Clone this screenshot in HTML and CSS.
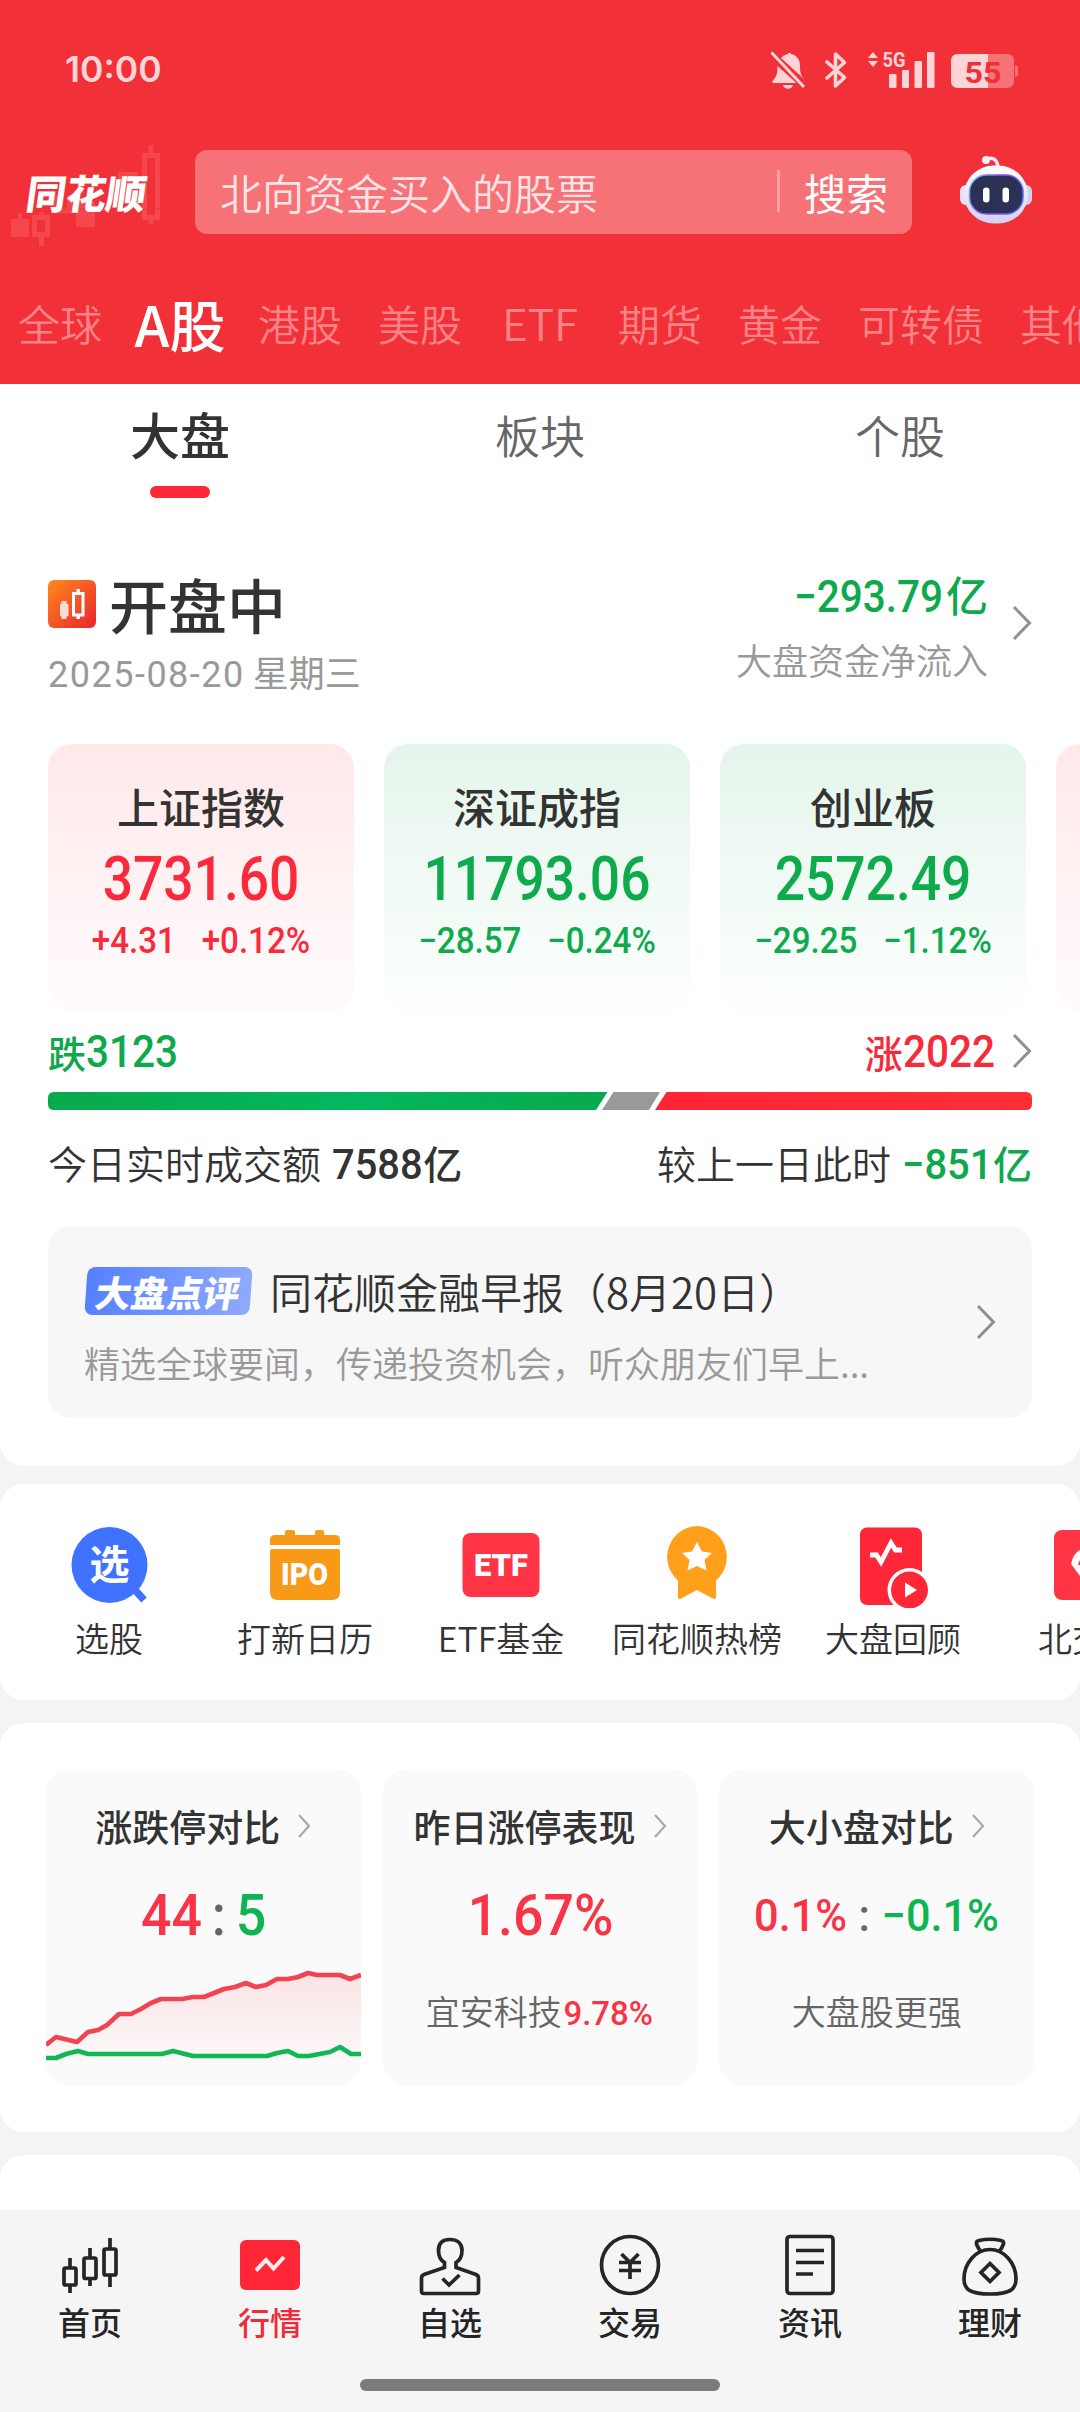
FILE: index.html
```html
<!DOCTYPE html>
<html lang="zh-CN">
<head>
<meta charset="utf-8">
<title>同花顺 行情</title>
<link rel="stylesheet" href="styles.css">
</head>
<body>
<header class="top">
  <svg class="top-art" viewBox="0 0 170 150" fill="none">
    <g fill="#f4484e"><rect x="11" y="100" width="18" height="18"/><rect x="18" y="94" width="4" height="6"/><rect x="76" y="82" width="19" height="26"/><rect x="118" y="53" width="20" height="30"/></g>
    <g stroke="#f4484e" stroke-width="5"><rect x="34.500" y="98.500" width="13" height="17"/><path d="M41.500 93v5M41.500 116v11M151 26v9M151 98v7"/><path d="M56.500 76v16h13V76"/><rect x="144.500" y="36.500" width="13" height="62"/></g>
    <path d="M0 49h165M0 90h165M0 131h170M51 0v145M122 0v145" stroke="#f2343b" stroke-width="1"/>
  </svg>
  <div class="status">
    <span class="clock">10:00</span>
    <svg class="status-icons" viewBox="0 0 250 40" fill="#fdd5d7">
      <path d="M11 8 C14 5 17 4 18 4 V3h3v1c6 1 9 6 9 12 0 7 1 9 4 13L11 8z"/>
      <path d="M7.500 16c0 8-1 11-5 15v2h24z"/><path d="M13 35h10c-1 5-9 5-10 0z"/>
      <path d="M1.500 2.500 34 37" stroke="#fdd5d7" stroke-width="3"/>
      <path d="M57 12 74.500 27.500 65.500 36V4l9 8.500L57 28" fill="none" stroke="#fdd5d7" stroke-width="3.600" stroke-linejoin="round" stroke-linecap="round"/>
      <path d="M103 2l5 6H98zM103 17l5-6H98z"/>
      <text x="112.500" y="17" class="net" textLength="23" lengthAdjust="spacingAndGlyphs">5G</text>
      <rect x="119" y="24" width="7.500" height="14" rx="1"/><rect x="132" y="20" width="7" height="18" rx="1"/><rect x="144.500" y="11" width="7.500" height="27" rx="1"/><rect x="157" y="2" width="7.500" height="36" rx="1"/>
      <path d="M218 4h19q7 0 7 7v20q0 7-7 7h-19z" fill="#f67276"/><path d="M218 4h-30q-7 0-7 7v20q0 7 7 7h30z"/><path d="M245 15q3 0 3 3v6q0 3-3 3z" fill="#f67276"/>
      <text x="194.500" y="32.500" class="batt" textLength="37" lengthAdjust="spacingAndGlyphs">55</text>
    </svg>
  </div>
  <div class="search-row">
    <span class="logo">同花顺</span>
    <div class="search"><span class="hint">北向资金买入的股票</span><i></i><b>搜索</b></div>
    <svg class="robot" viewBox="0 0 76 72">
      <defs><linearGradient id="shell" x1="0" y1="0" x2="0" y2="1"><stop offset="0" stop-color="#fff"/><stop offset=".6" stop-color="#e6e4fa"/><stop offset="1" stop-color="#d4cff2"/></linearGradient>
      <linearGradient id="rim" x1="0" y1="0" x2="1" y2=".4"><stop offset="0" stop-color="#72c6ff"/><stop offset=".5" stop-color="#9a4af0"/><stop offset="1" stop-color="#5a66f0"/></linearGradient></defs>
      <path d="M28 7c7-2 11 0 12 8" fill="none" stroke="#e8e6fb" stroke-width="3.500"/><circle cx="28" cy="8" r="4" fill="#f1effd"/>
      <rect x="2" y="33" width="12" height="20" rx="6" fill="#e4e1f8"/><rect x="62" y="33" width="12" height="20" rx="6" fill="#d3cff3"/>
      <rect x="6" y="13.500" width="64" height="58" rx="30" fill="url(#shell)"/>
      <rect x="11.500" y="23" width="53.500" height="39" rx="17" fill="#2a3154" stroke="url(#rim)" stroke-width="1.500"/>
      <rect x="25" y="35.500" width="6.500" height="15" rx="3.200" fill="#fff"/><rect x="44.500" y="35.500" width="6.500" height="15" rx="3.200" fill="#fff"/>
    </svg>
  </div>
  <nav class="markets"><span>全球</span><span class="on">A股</span><span>港股</span><span>美股</span><span class="etf">ETF</span><span>期货</span><span>黄金</span><span>可转债</span><span>其他</span></nav>
</header>

<main>
<section class="panel overview">
  <div class="subtabs"><span class="on">大盘</span><span>板块</span><span>个股</span></div>
  <div class="state">
    <div class="state-left">
      <h1><svg class="open-icon" viewBox="0 0 48 48"><defs><linearGradient id="og" x1="0" y1="0" x2="1" y2="1"><stop offset="0" stop-color="#ff8a1c"/><stop offset="1" stop-color="#e8252f"/></linearGradient></defs><rect width="48" height="48" rx="6" fill="url(#og)"/><path d="M12 25q0-1.500 1.500-1.500V21h5v2.500q2 0 2 1.500v10q0 1.500-2 1.500V39h-5v-2.500q-1.500 0-1.500-1.500z" fill="#fddcd6"/><rect x="25.500" y="13.500" width="9.500" height="21.500" fill="none" stroke="#fff" stroke-width="3"/><path d="M30.200 9v4M30.200 36v3" stroke="#fff" stroke-width="3.500"/></svg>开盘中</h1>
      <p><span class="n">2025-08-20</span> 星期三</p>
    </div>
    <div class="state-right"><strong class="green"><span class="n">−293.79</span>亿</strong><p>大盘资金净流入</p></div>
    <svg class="chev" viewBox="0 0 20 36"><path d="M2 2 17.500 18 2 34"/></svg>
  </div>
  <div class="indices">
    <article class="idx up"><h2>上证指数</h2><strong class="n">3731.60</strong><p class="n"><span>+4.31</span><span>+0.12%</span></p></article>
    <article class="idx down"><h2>深证成指</h2><strong class="n">11793.06</strong><p class="n"><span>−28.57</span><span>−0.24%</span></p></article>
    <article class="idx down"><h2>创业板</h2><strong class="n">2572.49</strong><p class="n"><span>−29.25</span><span>−1.12%</span></p></article>
    <article class="idx up"></article>
  </div>
  <div class="breadth"><span class="green">跌<b class="n">3123</b></span><span class="red">涨<b class="n">2022</b></span><svg class="chev" viewBox="0 0 20 36"><path d="M2 2 17.500 18 2 34"/></svg></div>
  <svg class="ratio" viewBox="0 0 984 18"><defs><linearGradient id="gg"><stop offset="0" stop-color="#08aa4c"/><stop offset=".55" stop-color="#03b75e"/><stop offset="1" stop-color="#08aa4c"/></linearGradient><linearGradient id="rg"><stop offset="0" stop-color="#ff2436"/><stop offset="1" stop-color="#ff2f36"/></linearGradient></defs>
    <path d="M6 0H559.500L548 18H6Q0 18 0 12V6Q0 0 6 0z" fill="url(#gg)"/><path d="M565.500 0H612L601 18H554z" fill="#999"/><path d="M618.500 0H978Q984 0 984 6V12Q984 18 978 18H607z" fill="url(#rg)"/></svg>
  <div class="volume"><p>今日实时成交额 <b><span class="n">7588</span>亿</b></p><p>较上一日此时 <b class="green"><span class="n">−851</span>亿</b></p></div>
  <div class="news">
    <div class="news-body"><div class="news-head"><span class="badge"><em>大盘点评</em></span><span class="news-title">同花顺金融早报（8月20日）</span></div><p>精选全球要闻，传递投资机会，听众朋友们早上...</p></div>
    <svg class="chev" viewBox="0 0 20 36"><path d="M2 2 17.500 18 2 34"/></svg>
  </div>
</section>

<section class="panel tools">
  <a><svg viewBox="0 0 84 84"><circle cx="42.500" cy="41" r="38" fill="#3f72ff"/><path d="M68 66l9 10" stroke="#3f72ff" stroke-width="7.500"/><text x="42.500" y="55" class="glyph">选</text></svg>选股</a>
  <a><svg viewBox="0 0 84 84" fill="#f79a17"><path d="M7 21v-5q0-5 5-5h10V8q0-2 2-2h6q2 0 2 2v3h20V8q0-2 2-2h5q2 0 2 2v3h11q5 0 5 5v5zM7 27q0-2 2-2h66q2 0 2 2v41q0 8-8 8H15q-8 0-8-8z"/><text x="41.500" y="61" class="mark" textLength="47" lengthAdjust="spacingAndGlyphs">IPO</text></svg>打新日历</a>
  <a><svg viewBox="0 0 84 84"><rect x="3.500" y="9" width="77" height="64" rx="8" fill="#ff3444"/><text x="42" y="51.500" class="mark" textLength="54" lengthAdjust="spacingAndGlyphs">ETF</text></svg>ETF基金</a>
  <a><svg viewBox="0 0 84 84"><path d="M42 2a31 31 0 0 1 19 54.500V73q0 3-3 1.500L42 66 26 74.500q-3 1.500-3-1.500V56.500A31 31 0 0 1 42 2z" fill="#ff9f1a"/><path d="M42 18l5 9.500 10 1.500-7.500 7 2 10.500L42 42l-9.500 4.500 2-10.500L27 29l10-1.500z" fill="#fff"/></svg>同花顺热榜</a>
  <a><svg viewBox="0 0 84 84"><rect x="9" y="3.500" width="62" height="77.500" rx="7" fill="#ff2638"/><path d="M19 31h6.500l4.500 7L40 19l4.500 7H51" fill="none" stroke="#fff" stroke-width="4.800"/><circle cx="58.500" cy="66" r="22" fill="#fff"/><circle cx="58.500" cy="66" r="18.500" fill="#ff2638"/><path d="M54 58.500v15l12-7.500z" fill="#fff"/></svg>大盘回顾</a>
  <a><svg viewBox="0 0 84 84"><rect x="7" y="6" width="71" height="70" rx="8" fill="#ff3444"/><path d="M24 40Q27 24 42 24T60 40L42 64z" fill="#fff"/><path d="M31 41q2-9 11-11t11 11z" fill="#ff3444"/></svg>北交所</a>
</section>

<section class="panel compare">
  <article><h3>涨跌停对比<svg class="chev s" viewBox="0 0 14 26"><path d="M2 2 12 13 2 24"/></svg></h3>
    <div class="big n"><span class="red2">44</span><i>:</i><span class="green2">5</span></div>
    <svg class="chart" viewBox="0 0 315 96"><defs><linearGradient id="area" x1="0" y1="0" x2="0" y2="1"><stop offset="0" stop-color="#fbe3e4"/><stop offset="1" stop-color="#fbf8f8"/></linearGradient></defs>
      <path d="M0 77 10 69 31 74 42 64 52 62 61 57 73 46 85 46 95 41 105 35 115 31 136 31 147 29 158 29 178 21 189 19 200 15 210 19 220 17 231 11 242 11 252 9 262 5 271 7 294 7 304 11 315 7V92H0z" fill="url(#area)"/>
      <path d="M0 77 10 69 31 74 42 64 52 62 61 57 73 46 85 46 95 41 105 35 115 31 136 31 147 29 158 29 178 21 189 19 200 15 210 19 220 17 231 11 242 11 252 9 262 5 271 7 294 7 304 11 315 7" fill="none" stroke="#f04450" stroke-width="4.600" stroke-linejoin="round"/>
      <path d="M0 90H10L20 86 32 83 42 86H116L127 83 147 88H221L231 85 242 83 252 88H263L284 84 294 79 305 86H315" fill="none" stroke="#0fb757" stroke-width="4.600" stroke-linejoin="round"/></svg>
  </article>
  <article><h3>昨日涨停表现<svg class="chev s" viewBox="0 0 14 26"><path d="M2 2 12 13 2 24"/></svg></h3>
    <div class="big n"><span class="red2">1.67%</span></div><p>宜安科技<b class="n red2">9.78%</b></p></article>
  <article><h3>大小盘对比<svg class="chev s" viewBox="0 0 14 26"><path d="M2 2 12 13 2 24"/></svg></h3>
    <div class="big mid n"><span class="red2">0.1%</span><i>:</i><span class="green2">−0.1%</span></div><p>大盘股更强</p></article>
</section>
<section class="panel next"></section>
</main>

<footer class="dock">
  <nav>
    <a><svg viewBox="0 0 72 72"><rect x="10" y="39" width="12" height="17" rx="1.500"/><rect x="30" y="29" width="12" height="20.500" rx="1.500"/><rect x="50" y="20" width="12" height="26" rx="1.500"/><path d="M16 29v10M16 56v8M36 19v10M36 50v7M56 9v11M56 46v12"/></svg>首页</a>
    <a class="on"><svg viewBox="0 0 72 72"><rect x="6" y="11" width="60" height="50" rx="6" fill="#ff2638" stroke="none"/><path d="M22 41.500 32 31l7.500 8.500L50 28" stroke="#ffecee" stroke-width="4"/></svg>行情</a>
    <a><svg viewBox="0 0 72 72"><path d="M30.500 38.500v-5C26 31 24.500 27 24.500 21.500 24.500 14 29 10.500 36 10.500S48 14 48 21.500C48 27 46.500 31 42 33.500v5L62 45.500Q64.500 46.500 64.500 49V62Q64.500 64.500 62 64.500H10Q7.500 64.500 7.500 62V49Q7.500 46.500 10 45.500z"/><path d="M28.500 49.500 35 56 45.500 46"/></svg>自选</a>
    <a><svg viewBox="0 0 72 72"><circle cx="36" cy="36" r="28.500"/><path d="M27.500 25 36 33.500 44.500 25M25 33.500H47M25 41.500H47M36 33V50"/></svg>交易</a>
    <a><svg viewBox="0 0 72 72"><rect x="13" y="7.500" width="46" height="57" rx="3"/><path d="M22 21.500H50M22 33.500H50M22 45H39"/></svg>资讯</a>
    <a><svg viewBox="0 0 72 72"><path d="M27 23Q24 19 22.500 15 22 12 25 11.500 36 9 47 11.500 50 12 49.500 15 48 19 45 23"/><path d="M36 20.500C22 20.500 10 34 10 50 10 61 17 65 36 65S62 61 62 50C62 34 50 20.500 36 20.500z"/><path d="M36 34.500 45 43.500 36 52.500 27 43.500z"/></svg>理财</a>
  </nav>
  <div class="home-bar"></div>
</footer>
</body>
</html>
```
FILE: styles.css
```css
* { box-sizing: border-box; margin: 0; padding: 0; }
body {
  width: 1080px; height: 2412px; overflow: hidden;
  display: flex; flex-direction: column;
  background: #f4f4f4; color: #333;
  font-family: "Noto Sans CJK SC", sans-serif;
}
b, strong, h1, h2, h3 { font-weight: 500; }
i, em { font-style: normal; }
.n { font-family: Roboto, "Noto Sans CJK SC", sans-serif; }
.green { color: #0ea94d; }
.red { color: #f52a3b; }
.red2 { color: #f93446; }
.green2 { color: #0db552; }
.chev { width: 20px; height: 36px; flex: none; fill: none; stroke: #8f8f8f; stroke-width: 3; }
.chev.s { width: 14px; height: 26px; stroke: #aaa; stroke-width: 2.2; }

.top { position: relative; height: 384px; flex: none; background: #f23037; color: #fff; overflow: hidden; }
.top-art { position: absolute; left: 0; top: 119px; width: 170px; height: 150px; }
.status { height: 150px; padding: 50px 60px 0 65px; display: flex; justify-content: space-between; align-items: flex-start; }
.clock { font: 600 35.5px/40px Inter, sans-serif; color: #fdd5d7; }
.status-icons { width: 250px; height: 40px; overflow: visible; }
.net { font: 700 20px Roboto, sans-serif; }
.batt { font: 700 30px Roboto, sans-serif; fill: #ee3038; }
.search-row { position: relative; height: 84px; display: flex; align-items: center; }
.logo { width: 195px; padding-left: 27px; font-size: 40px; line-height: 50px; font-weight: 900; letter-spacing: -.2px; transform: skewX(-8deg); }
.search { width: 717px; height: 84px; border-radius: 12px; background: #f67277; padding: 0 24px 2px 25px; display: flex; align-items: center; font-size: 42px; }
.hint { flex: 1; color: #ffe4e5; font-weight: 350; }
.search i { width: 3px; height: 42px; background: #fba3a6; margin-right: 24px; }
.search b { font-weight: 400; }
.robot { width: 76px; height: 72px; margin: -9px 0 0 46px; }
.markets { height: 150px; padding: 26px 0 0 18px; display: flex; align-items: center; gap: 36px; white-space: nowrap; font-size: 42px; font-weight: 350; color: #fb8388; }
.markets span { flex: none; }
.markets .etf { width: 84px; text-align: center; font-size: 44px; }
.markets .on { width: 84px; font-size: 56px; font-weight: 500; color: #fff; display: flex; justify-content: center; }

main { flex: 1; min-height: 0; display: flex; flex-direction: column; overflow: hidden; }
.panel { background: #fff; border-radius: 24px; flex: none; }
.overview { height: 1082px; border-radius: 0 0 24px 24px; margin-bottom: 18px; overflow: hidden; }
.subtabs { height: 114px; display: grid; grid-template-columns: repeat(3, 360px); justify-items: center; font-size: 45px; line-height: 102px; color: #666; font-weight: 350; }
.subtabs .on { font-size: 50px; line-height: 98px; color: #333; font-weight: 500; display: flex; flex-direction: column; align-items: center; }
.subtabs .on::after { content: ""; width: 60px; height: 12px; border-radius: 6px; background: #ff2638; margin-top: 4px; }
.state { height: 246px; padding: 59px 48px 0; display: flex; }
.state-left { flex: 1; }
.state h1 { height: 94px; display: flex; align-items: center; gap: 13px; font-size: 59px; line-height: 94px; }
.open-icon { width: 48px; height: 48px; }
.state p { font-size: 36px; line-height: 40px; color: #999; font-weight: 350; }
.state .state-left p { font-weight: 400; }
.state-left p .n { letter-spacing: 1.5px; }
.state-right { text-align: right; margin-right: 24px; }
.state-right strong { display: block; font-size: 42px; line-height: 74px; }
.state-right strong .n { display: inline-block; font-size: 45px; transform: scaleX(.9); transform-origin: 0 50%; margin-right: -14px; }
.state-right p { margin-top: 5px; }
.state .chev { margin-top: 48px; }
.indices { height: 268px; padding-left: 48px; display: flex; gap: 30px; overflow: hidden; }
.idx { width: 306px; height: 268px; flex: none; border-radius: 24px; padding-top: 30px; text-align: center; }
.idx.up { background: linear-gradient(#ffe8ea, #fffcfc); color: #fa2a3c; }
.idx.down { background: linear-gradient(#e4f5eb, #fdfffe); color: #0eab4d; }
.idx h2 { font-size: 42px; line-height: 64px; color: #333; font-weight: 500; }
.idx strong { display: block; font-size: 62px; line-height: 82px; transform: scaleX(.86); }
.idx p { display: flex; justify-content: center; gap: 28px; font-size: 36px; line-height: 43px; font-weight: 500; transform: scaleX(.92); white-space: nowrap; }
.breadth { height: 80px; padding: 0 48px 2px; display: flex; align-items: center; font-size: 38px; }
.breadth span { display: flex; align-items: center; font-weight: 500; }
.breadth span:first-child { flex: 1; }
.breadth .n { font-size: 45px; transform: scaleX(.9); transform-origin: 0 50%; margin-right: -10px; }
.breadth .chev { margin-left: 17px; }
.ratio { display: block; width: 984px; height: 18px; margin: 0 48px; }
.volume { height: 116px; padding: 0 48px 12px; display: flex; justify-content: space-between; align-items: center; font-size: 39px; font-weight: 350; word-spacing: 2px; }
.volume .n { display: inline-block; font-size: 42px; transform: scaleX(.95); transform-origin: 0 50%; margin-right: -4px; }
.news { margin: 0 48px; height: 192px; border-radius: 24px; background: #f7f7f7; padding: 42px 36px 36px; display: flex; align-items: center; justify-content: space-between; }
.news .chev { margin-top: -6px; }
.news-head { display: flex; align-items: center; gap: 19px; height: 60px; }
.badge { width: 165px; height: 48px; margin-left: 2px; border-radius: 8px; background: linear-gradient(90deg, #5580ff, #8eaaff); transform: skewX(-4deg); display: flex; align-items: center; justify-content: center; color: #fff; font-size: 36px; font-weight: 900; }
.badge em { transform: skewX(-6deg); }
.news-title { font-size: 42px; line-height: 60px; font-weight: 350; }
.news p { font-size: 36px; line-height: 54px; margin-top: 14px; color: #999; font-weight: 350; }
.tools { height: 216px; margin-bottom: 23px; padding: 40px 0 0 11px; display: flex; overflow: hidden; }
.tools a { width: 196px; flex: none; display: flex; flex-direction: column; align-items: center; font-size: 34px; line-height: 60px; font-weight: 350; }
.tools svg { width: 84px; height: 84px; }
.tools text { fill: #fff; text-anchor: middle; }
.glyph { font: 700 40px "Noto Sans CJK SC", sans-serif; }
.mark { font: 900 32px Roboto, sans-serif; }
.compare { height: 409px; margin-bottom: 23px; padding: 46px; display: flex; gap: 22px; }
.compare article { width: 315px; height: 317px; border-radius: 24px; background: #fafafa; overflow: hidden; display: flex; flex-direction: column; align-items: center; }
.compare h3 { height: 114px; display: flex; align-items: center; gap: 17px; font-size: 37px; white-space: nowrap; }
.big { height: 64px; display: flex; align-items: center; font-size: 57px; font-weight: 500; transform: scaleX(.94); }
.big i { width: 36px; text-align: center; color: #666; }
.big.mid { font-size: 45px; transform: scaleX(.96); }
.compare p { font-size: 34px; line-height: 50px; margin-top: 39px; color: #666; font-weight: 350; }
.compare p .n { display: inline-block; transform: scaleX(.97); }
.chart { width: 315px; height: 96px; margin-top: 21px; }
.next { height: 80px; }

.dock { height: 202px; flex: none; background: #f5f5f5; }
.dock nav { height: 169px; display: flex; padding-top: 19px; }
.dock a { width: 180px; display: flex; flex-direction: column; align-items: center; font-size: 32px; line-height: 40px; color: #252525; font-weight: 500; }
.dock a.on { color: #ee2b3b; }
.dock svg { width: 72px; height: 72px; fill: none; stroke: #252525; stroke-width: 3.7; }
.home-bar { width: 360px; height: 12px; border-radius: 6px; background: #7b7b7b; margin: 0 auto; }
```
